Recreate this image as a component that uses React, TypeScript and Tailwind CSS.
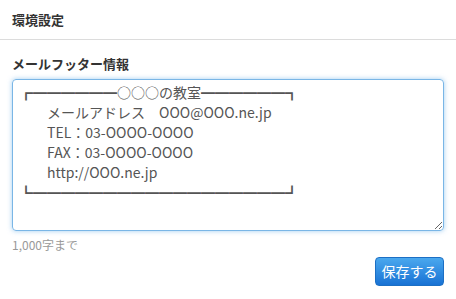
import React from "react";

const footer = [
  "┏━━━━━━○○○の教室━━━━━━┓",
  "　　メールアドレス　OOO@OOO.ne.jp",
  "　　TEL：03-OOOO-OOOO",
  "　　FAX：03-OOOO-OOOO",
  "　　http://OOO.ne.jp",
  "┗━━━━━━━━━━━━━━━━━━┛",
].join("\n");

export default function App() {
  return (
    <div
      className="w-[456px] h-[299px] bg-white text-[#333]"
      style={{ fontFamily: '"Noto Sans CJK JP", "Noto Sans", sans-serif' }}
    >
      <div className="h-[40px] border-b border-[#dcdcdc] px-[12px] flex items-center">
        <h1 className="text-[13px] font-bold text-[#333]">環境設定</h1>
      </div>

      <div className="px-[12px] pt-[14px]">
        <label className="block text-[13px] font-bold leading-[20px] text-[#333]">
          メールフッター情報
        </label>
        <textarea
          readOnly
          spellCheck={false}
          defaultValue={footer}
          className="mt-[5px] block w-[432px] h-[152px] rounded-[4px] border border-[#7ab6e6] shadow-[0_0_5px_rgba(102,175,233,0.6)] pl-[6px] pr-[13px] pt-[2px] text-[14px] leading-[20px] text-[#555] outline-none resize-y"
        />
        <p className="mt-[6px] text-[12px] leading-[16px] text-[#999]">1,000字まで</p>
        <div className="flex justify-end mt-[4px]">
          <button className="w-[69px] h-[29px] rounded-[4px] border border-[#1c6fc4] bg-gradient-to-b from-[#4aa8ee] to-[#1872d4] text-white text-[14px]">
            保存する
          </button>
        </div>
      </div>
    </div>
  );
}
